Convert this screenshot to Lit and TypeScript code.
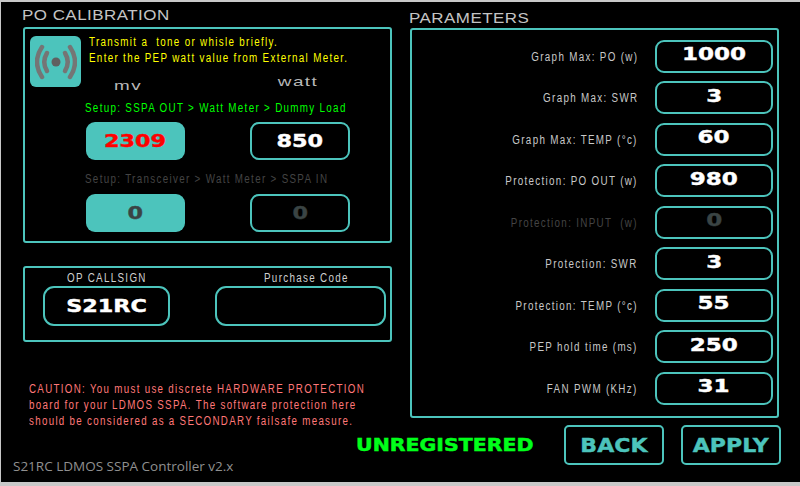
import { LitElement, html, css } from "lit";
import { customElement } from "lit/decorators.js";

const rows: [string, string, boolean?][] = [
  ["Graph Max: PO (w)", "1000"],
  ["Graph Max: SWR", "3"],
  ["Graph Max: TEMP (°c)", "60"],
  ["Protection: PO OUT (w)", "980"],
  ["Protection: INPUT  (w)", "0", true],
  ["Protection: SWR", "3"],
  ["Protection: TEMP (°c)", "55"],
  ["PEP hold time (ms)", "250"],
  ["FAN PWM (KHz)", "31"],
];

@customElement("app-root")
export class AppRoot extends LitElement {
  static styles = css`
    :host { display: block; width: 800px; height: 486px; }
    * { box-sizing: border-box; }
    .screen {
      width: 800px; height: 486px; background: #000; overflow: hidden;
      border-top: 2px solid #c8c8c8; border-bottom: 4px solid #c8c8c8; border-left: 1px solid #c8c8c8;
      font-family: "Liberation Sans", sans-serif; color: #c4c4c4;
      display: grid; grid-template-columns: 369px 369px; column-gap: 18px;
      padding-left: 22px; position: relative;
    }
    .left, .right { display: flex; flex-direction: column; }
    .title { font-size: 14.5px; line-height: 16px; color: #c4c4c4; letter-spacing: 0.4px; transform: scaleX(1.17); transform-origin: left center; white-space: nowrap; }
    .left .title { margin-top: 5px; margin-left: -1px; }
    .right .title { margin-top: 8px; margin-left: -1px; }
    .panel { border: 2px solid #4cc4bc; border-radius: 3px; }
    .cal { width: 369px; height: 216px; margin-top: 4px; padding: 7px 0 0 5px; }
    .cal-head { display: flex; gap: 8px; height: 44px; }
    .icon { width: 51px; height: 51px; flex: none; background: #4cc4bc; border-radius: 6px; display: flex; align-items: center; justify-content: center; }
    .narrow { font-size: 12.5px; letter-spacing: 1.68px; white-space: pre; transform: scaleX(0.785); transform-origin: left center; }
    .msg { color: #ffff00; line-height: 16px; margin-top: -2px; }
    .units { display: grid; grid-template-columns: 162px 100px; margin-left: 57px; height: 20px; }
    .unit { font-size: 13px; letter-spacing: 1px; transform: scaleX(1.45); text-align: center; color: #b8b8b8; line-height: 14px; }
    .unit.mv { margin-top: -1px; margin-left: -80px; }
    .unit.watt { margin-top: -5px; margin-left: -2px; }
    .setup { line-height: 14px; margin-left: 55px; }
    .setup.on { color: #00ff00; margin-top: 1px; }
    .setup.off { color: #444; }
    .pair { display: flex; gap: 65px; margin-left: 56px; }
    .pair.a { margin-top: 7px; margin-bottom: 12px; }
    .pair.b { margin-top: 8px; }
    .box { height: 38px; width: 100px; flex: none; border-radius: 9px; display: flex; align-items: center; justify-content: center; }
    .teal { background: #4cc4bc; width: 99px; }
    .line { border: 2px solid #4cc4bc; background: #000; }
    .val { display: inline-block; font-family: "DejaVu Sans", sans-serif; font-weight: 700; font-size: 18px; line-height: 20px; color: #fff; transform: scaleX(1.24); -webkit-text-stroke: 0.4px currentColor; }
    .val.red { color: #ff0000; }
    .val.dim { color: #3a4444; }
    .op { width: 369px; height: 76px; margin-top: 23px; padding: 3px 0 0 18px; }
    .op-labels { display: flex; line-height: 14px; color: #d0d0d0; height: 15px; }
    .op-labels .narrow { display: block; flex: none; }
    .op-labels .narrow:first-child { margin-left: 24px; width: 197px; }
    .op-fields { display: flex; gap: 45px; }
    .op-fields .box { width: 127px; height: 40px; border-radius: 11px; }
    .op-fields .box + .box { width: 171px; }
    .caution { margin: 39px 0 0 6px; color: #ff7878; line-height: 16px; transform: scaleX(0.78); }
    .footer { margin: 28px 0 0 -10px; font-family: "Open Sans", sans-serif; font-size: 13.5px; line-height: 18px; color: #909090; white-space: nowrap; }
    .params { width: 369px; height: 390px; margin-top: 2px; padding: 9.5px 4px 0 0; display: flex; flex-direction: column; gap: 8.5px; }
    .row { display: flex; align-items: center; justify-content: flex-end; gap: 17px; height: 33px; }
    .row label { display: inline-block; color: #c8c8c8; line-height: 14px; margin-top: 1px; transform-origin: right center; }
    .row label.dim { color: #444; }
    .row .box { width: 118px; height: 33px; border-radius: 9px; }
    .row .val { margin-top: -4px; font-size: 18px; transform: scaleX(1.28); }
    .actions { display: flex; align-items: center; margin-top: 7px; margin-left: -54px; }
    .unreg { flex: none; font-family: "DejaVu Sans", sans-serif; font-weight: 700; font-size: 17.5px; line-height: 20px; color: #00ff1a; width: 208px; transform: scaleX(1.17); transform-origin: left center; white-space: nowrap; -webkit-text-stroke: 0.5px currentColor; }
    .btn { flex: none; width: 100px; height: 40px; border: 2px solid #4cc4bc; border-radius: 5px; color: #4cc4bc; display: flex; align-items: center; justify-content: center; font-family: "DejaVu Sans", sans-serif; font-weight: 700; font-size: 19px; margin-right: 17px; -webkit-text-stroke: 0.4px currentColor; }
    .btn span { display: inline-block; transform: scaleX(1.16); }
  `;

  render() {
    return html`<div class="screen">
      <div class="left">
        <div class="title">PO CALIBRATION</div>
        <div class="panel cal">
          <div class="cal-head">
            <div class="icon">
              <svg width="42" height="38" viewBox="0 0 42 38" fill="none" stroke="#757575" stroke-width="4.5" stroke-linecap="round">
                <circle cx="21" cy="19" r="4.5" fill="#606060" stroke="none"/>
                <path d="M12 10 Q6.5 19 12 28"/>
                <path d="M30 10 Q35.5 19 30 28"/>
                <path d="M7 4 Q-3 19 7 34"/>
                <path d="M35 4 Q45 19 35 34"/>
              </svg>
            </div>
            <div class="narrow msg">Transmit a  tone or whisle briefly.
Enter the PEP watt value from External Meter.</div>
          </div>
          <div class="units"><div class="unit mv">mv</div><div class="unit watt">watt</div></div>
          <div class="narrow setup on">Setup: SSPA OUT > Watt Meter > Dummy Load</div>
          <div class="pair a">
            <div class="box teal"><span class="val red">2309</span></div>
            <div class="box line"><span class="val">850</span></div>
          </div>
          <div class="narrow setup off">Setup: Transceiver > Watt Meter > SSPA IN</div>
          <div class="pair b">
            <div class="box teal"><span class="val dim">0</span></div>
            <div class="box line"><span class="val dim">0</span></div>
          </div>
        </div>
        <div class="panel op">
          <div class="op-labels"><span class="narrow">OP CALLSIGN</span><span class="narrow">Purchase Code</span></div>
          <div class="op-fields">
            <div class="box line"><span class="val">S21RC</span></div>
            <div class="box line"></div>
          </div>
        </div>
        <div class="narrow caution">CAUTION: You must use discrete HARDWARE PROTECTION
board for your LDMOS SSPA. The software protection here
should be considered as a SECONDARY failsafe measure.</div>
        <div class="footer">S21RC LDMOS SSPA Controller v2.x</div>
      </div>
      <div class="right">
        <div class="title">PARAMETERS</div>
        <div class="panel params">
          ${rows.map(([l, v, dim]) => html`<div class="row">
            <label class="narrow ${dim ? "dim" : ""}">${l}</label>
            <div class="box line"><span class="val ${dim ? "dim" : ""}">${v}</span></div>
          </div>`)}
        </div>
        <div class="actions">
          <div class="unreg">UNREGISTERED</div>
          <div class="btn"><span>BACK</span></div>
          <div class="btn"><span>APPLY</span></div>
        </div>
      </div>
    </div>`;
  }
}
